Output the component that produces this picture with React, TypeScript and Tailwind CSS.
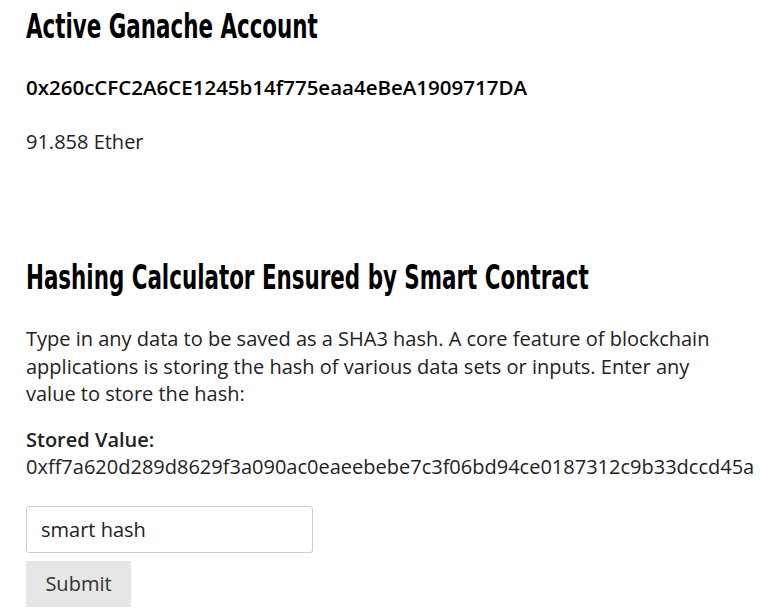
import { useState } from "react";

const heading =
  "inline-block origin-left scale-x-[0.70] whitespace-nowrap font-['DejaVu_Sans',sans-serif] font-bold font-stretch-condensed text-[34px] leading-[40px] text-black";

export default function App() {
  const [value, setValue] = useState("smart hash");

  return (
    <main className="min-h-screen overflow-x-hidden bg-white px-[26px] font-['Open_Sans',sans-serif] text-[20px] leading-[27.5px] text-[#222]">
      {/* Account section */}
      <section>
        <h1 className="overflow-hidden pt-[6px]">
          <span className={heading}>Active Ganache Account</span>
        </h1>
        <p className="mt-[28px] text-[20.5px] font-semibold text-black">0x260cCFC2A6CE1245b14f775eaa4eBeA1909717DA</p>
        <p className="mt-[26px]">91.858 Ether</p>
      </section>

      {/* Hashing calculator */}
      <section className="mt-[102px]">
        <h2 className="overflow-hidden">
          <span className={heading}>Hashing Calculator Ensured by Smart Contract</span>
        </h2>
        <p className="mt-[28px] max-w-[700px]">
          Type in any data to be saved as a SHA3 hash. A core feature of blockchain applications is storing the hash of various data sets or inputs. Enter any value to store the hash:
        </p>
        <div className="mt-[18px]">
          <div className="font-semibold">Stored Value:</div>
          <div>0xff7a620d289d8629f3a090ac0eaeebebe7c3f06bd94ce0187312c9b33dccd45a</div>
        </div>
        <form className="mt-[25px] flex flex-col items-start gap-[8px]" onSubmit={(e) => e.preventDefault()}>
          <input
            value={value}
            onChange={(e) => setValue(e.target.value)}
            className="h-[47px] w-[287px] rounded-[3px] border border-[#ccc] px-[14px] text-[20px] text-[#222] outline-none"
          />
          <button type="submit" className="h-[46px] w-[105px] bg-[#e6e6e6] text-[20px] text-[#333]">
            Submit
          </button>
        </form>
      </section>
    </main>
  );
}
